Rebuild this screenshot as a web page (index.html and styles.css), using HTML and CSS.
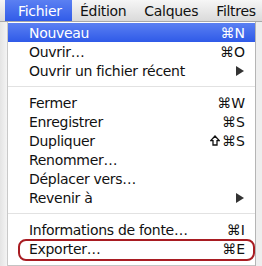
FILE: index.html
```html
<!DOCTYPE html>
<html lang="fr">
<head>
    <meta charset="UTF-8">
    <title>Menu Fichier</title>
    <link rel="stylesheet" href="styles.css">
</head>
<body>

    <div class="menubar">
        <span class="title active">Fichier</span>
        <span class="title">Édition</span>
        <span class="title">Calques</span>
        <span class="title">Filtres</span>
    </div>

    <div class="screen">
        <div class="side"></div>
        <div class="menu">
            <div class="item selected"><span>Nouveau</span><span class="key">⌘N</span></div>
            <div class="item"><span>Ouvrir…</span><span class="key">⌘O</span></div>
            <div class="item"><span>Ouvrir un fichier récent</span><span class="arrow"></span></div>
            <div class="sep"></div>
            <div class="item"><span>Fermer</span><span class="key">⌘W</span></div>
            <div class="item"><span>Enregistrer</span><span class="key">⌘S</span></div>
            <div class="item">
                <span>Dupliquer</span>
                <span class="key">
                    <!-- shift key arrow -->
                    <svg class="shift" width="10" height="11" viewBox="0 0 10 11">
                        <path d="M5 1 L9.2 5.6 H7 V10 H3 V5.6 H0.8 Z" fill="none" stroke="#111" stroke-width="1.3" stroke-linejoin="miter"/>
                    </svg>⌘S
                </span>
            </div>
            <div class="item"><span>Renommer…</span></div>
            <div class="item"><span>Déplacer vers…</span></div>
            <div class="item"><span>Revenir à</span><span class="arrow"></span></div>
            <div class="sep"></div>
            <div class="item"><span>Informations de fonte…</span><span class="key">⌘I</span></div>
            <div class="item marked"><span>Exporter…</span><span class="key">⌘E</span></div>
        </div>
        <div class="side right"></div>
    </div>

</body>
</html>
```

FILE: styles.css
```css
/* reset */
* {
    margin: 0;
    padding: 0;
    box-sizing: border-box;
}

body {
    width: 262px;
    height: 266px;
    overflow: hidden;
    background: #ececec;
    font-family: "DejaVu Sans", sans-serif;
    font-size: 14px;
    letter-spacing: -0.3px;
    color: #111;
}

/* top menu bar */
.menubar {
    height: 22px;
    display: flex;
    align-items: center;
    padding-left: 5px;
    background: linear-gradient(#f6f6f6, #dadada);
    border-bottom: 1px solid #a8a8a8;
    white-space: nowrap;
    overflow: hidden;
}

.title {
    flex-shrink: 0;
    height: 22px;
    line-height: 22px;
    padding: 0 8px 0 8px;
    margin-right: 2px;
}

.active {
    color: #fff;
    background: linear-gradient(#5b80f2, #2f5ae8);
    padding-left: 13px;
    width: 67px;
    margin-right: 0;
}

/* area under the bar */
.screen {
    display: flex;
    height: 244px;
}

.side {
    width: 8px;
    background: linear-gradient(90deg, #e4e4e4, #f4f4f4);
    border-right: 1px solid #c9c9c9;
}

.side.right {
    width: 7px;
    border-right: none;
    border-left: 1px solid #b5b5b5;
    background: #eeeeee;
}

.menu {
    flex: 1;
    background: #fff;
    padding-top: 1px;
    border-bottom: 1px solid #c4c4c4;
}

.item {
    height: 19px;
    display: flex;
    align-items: center;
    justify-content: space-between;
    padding: 0 10px 0 21px;
    white-space: nowrap;
}

.selected {
    color: #fff;
    background: linear-gradient(#5b80f2, #2f5ae8);
}

.key {
    display: flex;
    align-items: center;
    letter-spacing: 0;
}

.shift {
    margin-right: 2px;
}

.arrow {
    width: 0;
    height: 0;
    margin-right: 1px;
    border-top: 5px solid transparent;
    border-bottom: 5px solid transparent;
    border-left: 8px solid #333;
}

.sep {
    height: 13px;
    display: flex;
    align-items: center;
}

.sep::before {
    content: "";
    flex: 1;
    height: 1px;
    background: #e2e2e2;
}

/* red annotation round Exporter */
.marked {
    position: relative;
}

.marked::after {
    content: "";
    position: absolute;
    left: 10px;
    right: 0;
    top: 0;
    bottom: -3px;
    border: 2px solid #a81c22;
    border-radius: 8px;
}
```
